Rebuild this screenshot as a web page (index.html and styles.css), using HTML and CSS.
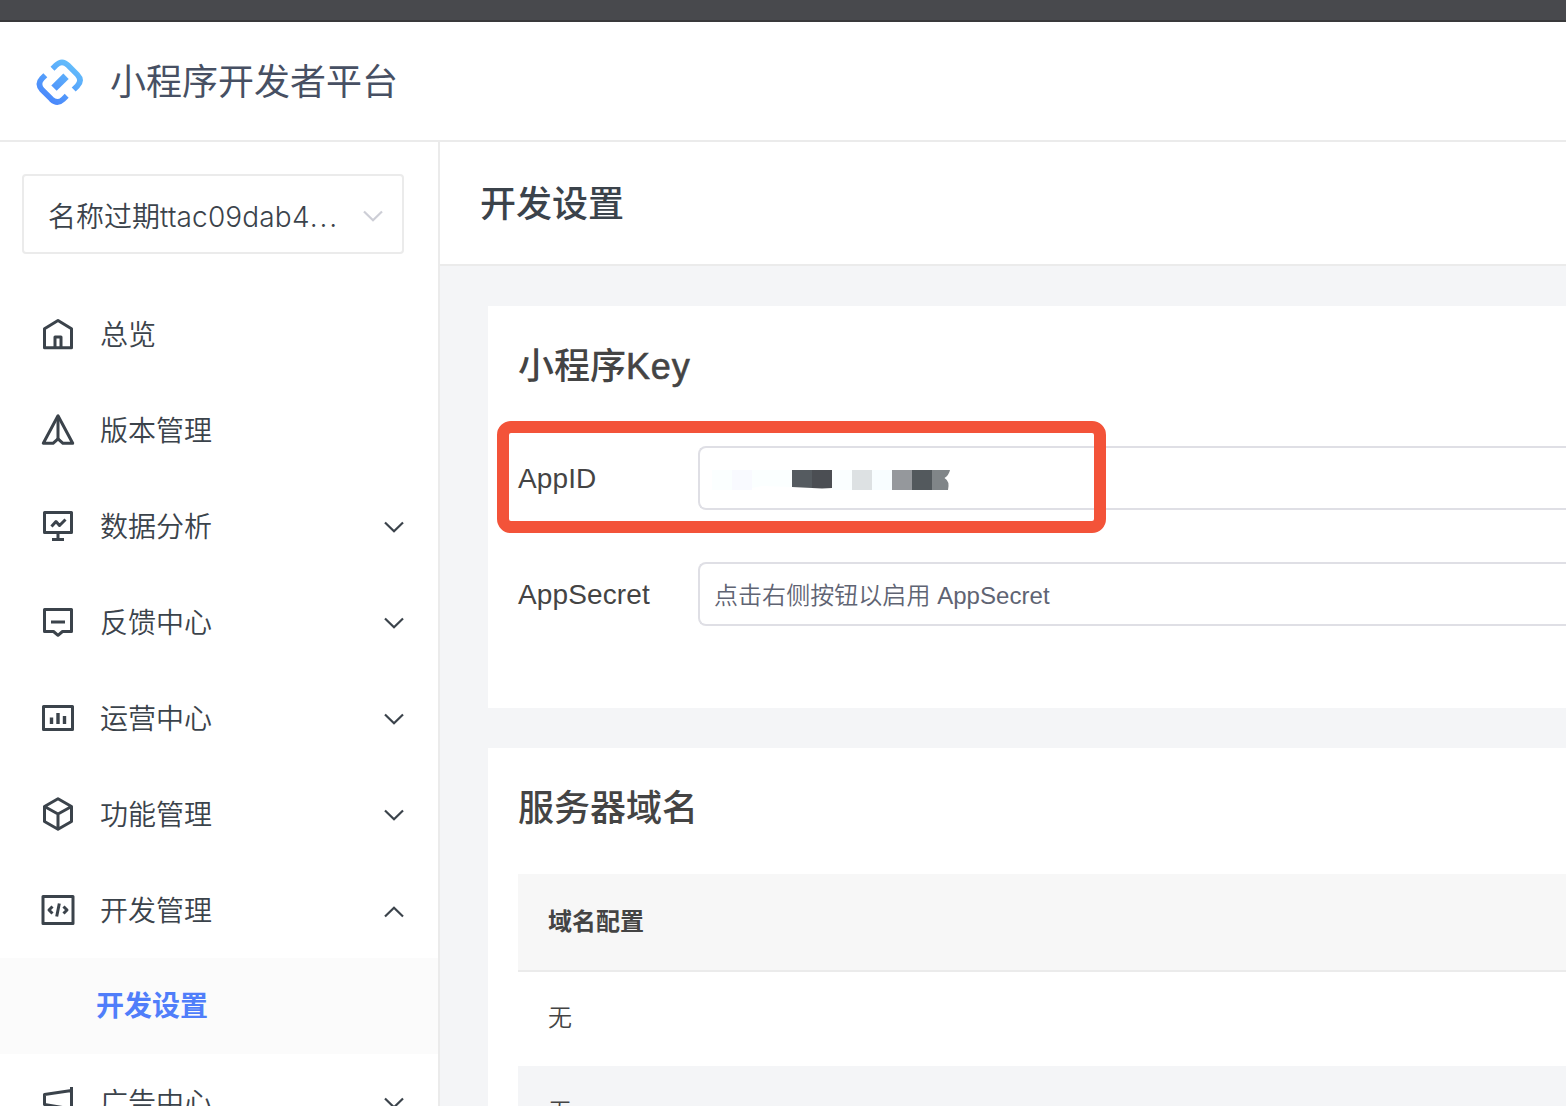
FILE: index.html
```html
<!DOCTYPE html>
<html lang="zh-CN">
<head>
<meta charset="utf-8">
<title>小程序开发者平台</title>
<link rel="stylesheet" href="styles.css">
</head>
<body>
<svg class="defs" width="0" height="0" aria-hidden="true">
  <symbol id="chevron" viewBox="0 0 22 14"><path d="M2 2.500 11 11.300 20 2.500"/></symbol>
</svg>
<div class="topbar"></div>
<header class="header">
  <svg class="logo" viewBox="0 0 48 48">
    <defs><linearGradient id="lg" gradientUnits="userSpaceOnUse" x1="12" y1="42" x2="36" y2="6"><stop offset="0" stop-color="#4a88fb"/><stop offset="1" stop-color="#63bdfb"/></linearGradient></defs>
    <g fill="none" stroke="url(#lg)" stroke-width="5.600">
      <path d="M16.500 10.800 20 7.300Q26 1.500 32 7.300L41.300 16.600Q46.800 22.400 41.300 28L37.700 31.600"/>
      <path d="M9.300 17.200 6 20.500Q.8 26 6 31.800L15.300 41.100Q21.300 46.800 27.200 41.200L30.700 37.800"/>
      <path d="M18 30.100 30 18.300" stroke-width="7.600"/>
    </g>
  </svg>
  <h1 class="brand">小程序开发者平台</h1>
</header>
<div class="layout">
  <aside class="sidebar">
    <div class="select"><span class="select-text">名称过期<span class="latin">ttac09dab4<span class="dots">...</span></span></span><svg class="chev muted"><use href="#chevron"/></svg></div>
    <nav class="menu">
      <div class="item"><svg class="icon" viewBox="0 0 36 36"><path d="M4.500 12.800 18 4.500 31.500 12.800V31.800H4.500Z"/><path d="M15 31V21H21V31"/></svg><span>总览</span></div>
      <div class="item"><svg class="icon" viewBox="0 0 36 36"><path d="M18 3.700 3.300 31.300H13L18 26.800 23 31.300H32.700Z"/><path d="M18 4V27"/></svg><span>版本管理</span></div>
      <div class="item"><svg class="icon" viewBox="0 0 36 36"><path d="M4.500 4.500H31.500V24.500H4.500ZM18 25V31M12 31.500H24"/><path d="M11.500 18.500 16 13.500 19.500 17.500 25.500 11.500"/></svg><span>数据分析</span><svg class="chev"><use href="#chevron"/></svg></div>
      <div class="item"><svg class="icon" viewBox="0 0 36 36"><path d="M4.500 5.500H31.500V27.500H22.500L18 31.300 13.500 27.500H4.500ZM11 18H25"/></svg><span>反馈中心</span><svg class="chev"><use href="#chevron"/></svg></div>
      <div class="item"><svg class="icon" viewBox="0 0 36 36"><path d="M3.500 6.500H32.500V29.500H3.500Z"/><path stroke-width="3.400" stroke-linecap="butt" d="M11.500 24V17.500M18 24V13M24.500 24V16"/></svg><span>运营中心</span><svg class="chev"><use href="#chevron"/></svg></div>
      <div class="item"><svg class="icon" viewBox="0 0 36 36"><path d="M18 2.800 31.500 10.500V25.500L18 33.200 4.500 25.500V10.500ZM4.500 10.500 18 18 31.500 10.500M18 18V33"/></svg><span>功能管理</span><svg class="chev"><use href="#chevron"/></svg></div>
      <div class="item"><svg class="icon" viewBox="0 0 36 36"><path d="M3 4.500H33V31.500H3Z"/><path d="M12.500 14.500 9 18 12.500 21.500M23.500 14.500 27 18 23.500 21.500M19.300 11.500 16.700 24.500"/></svg><span>开发管理</span><svg class="chev up"><use href="#chevron"/></svg></div>
      <div class="subitem">开发设置</div>
      <div class="item"><svg class="icon" viewBox="0 0 36 36"><path d="M31.500 3V32M31.500 6.500 4.500 10.500V20.500L31.500 25"/></svg><span>广告中心</span><svg class="chev"><use href="#chevron"/></svg></div>
    </nav>
  </aside>
  <main class="main">
    <div class="page-title"><h2>开发设置</h2></div>
    <div class="content">
      <section class="card keys">
        <h3>小程序<span class="key">Key</span></h3>
        <div class="field">
          <label>AppID</label>
          <div class="input">
            <svg class="mosaic" viewBox="0 0 240 20">
              <path fill="#fbffff" d="M0 0H80V17L50 16 30 20H0Z"/>
              <path fill="#f9faff" d="M20 0H40V20H20Z"/>
              <path fill="#555b60" d="M80 0H100V18L80 17Z"/>
              <path fill="#4b4e53" d="M100 0H120V18L110 18.600 100 18Z"/>
              <path fill="#fafeff" d="M120 0H140V20H120Z"/>
              <path fill="#dde1e3" d="M140 0H160V20H140Z"/>
              <path fill="#f8fdff" d="M160 0H180V20H160Z"/>
              <path fill="#95989c" d="M180 0H200V20H180Z"/>
              <path fill="#53595d" d="M200 0H220V20H200Z"/>
              <path fill="#808588" d="M220 0H238Q237 5 232.500 8 238 11 236 20H220Z"/>
            </svg>
          </div>
          <div class="highlight"></div>
        </div>
        <div class="field">
          <label>AppSecret</label>
          <div class="input placeholder">点击右侧按钮以启用 AppSecret</div>
        </div>
      </section>
      <section class="card domains">
        <h3>服务器域名</h3>
        <div class="table">
          <div class="thead">域名配置</div>
          <div class="row">无</div>
          <div class="row alt">无</div>
        </div>
      </section>
    </div>
  </main>
</div>
</body>
</html>
```
FILE: styles.css
```css
* { box-sizing: border-box; }
body {
  margin: 0;
  height: 1106px;
  overflow: hidden;
  display: flex;
  flex-direction: column;
  background: #fff;
  color: #444;
  font-family: "Liberation Sans", "Noto Sans CJK SC", sans-serif;
}
h1, h2, h3 { margin: 0; font-weight: 500; font-size: 36px; line-height: 52px; }
.defs { position: absolute; }
.topbar { flex: none; height: 22px; background: #48494d; border-bottom: 2px solid #39393b; }
.header {
  flex: none;
  height: 120px;
  display: flex;
  align-items: center;
  gap: 26px;
  padding: 2px 0 0 36px;
  border-bottom: 2px solid #ebebeb;
}
.logo { width: 48px; height: 48px; }
.brand { padding-top: 2px; color: #475063; font-weight: 400; }
.layout { flex: 1; min-height: 0; display: flex; }
.sidebar {
  flex: none;
  width: 440px;
  padding-top: 32px;
  border-right: 2px solid #ebebeb;
  overflow: hidden;
}
.select {
  display: flex;
  align-items: center;
  justify-content: space-between;
  width: 382px;
  height: 80px;
  margin: 0 0 32px 22px;
  padding: 2px 18px 0 24px;
  border: 2px solid #ebebeb;
  border-radius: 4px;
  color: #3b434b;
  font-size: 28px;
}
.select-text { font-weight: 350; white-space: nowrap; }
.latin { font-family: Inter, "Liberation Sans", sans-serif; font-weight: 300; letter-spacing: 0.15px; }
.dots { letter-spacing: 1.9px; }
.chev { flex: none; width: 22px; height: 14px; fill: none; stroke: #3b434b; stroke-width: 2.2; }
.chev.muted { margin-top: 2px; stroke: #cdced6; }
.item {
  display: flex;
  align-items: center;
  height: 96px;
  padding: 0 33px 0 40px;
  color: #3b434b;
  font-size: 28px;
  font-weight: 350;
}
.item span { padding-bottom: 3px; }
.item .icon { width: 36px; height: 36px; margin-right: 24px; }
.item .chev { margin: 2px 0 0 auto; }
.item .chev.up { margin-top: 4px; transform: rotate(180deg); }
.icon { fill: none; stroke: #3b434b; stroke-width: 3; stroke-linejoin: round; }
.subitem {
  height: 96px;
  padding: 1px 0 0 96px;
  line-height: 96px;
  background: #fbfbfb;
  color: #507efa;
  font-size: 28px;
  font-weight: 700;
}
.main { flex: 1; min-width: 0; overflow: hidden; background: #f4f5f7; }
.page-title {
  height: 124px;
  padding: 37px 0 0 40px;
  background: #fff;
  border-bottom: 2px solid #ebebeb;
}
.page-title h2 { color: #3b434b; }
.content { display: flex; flex-direction: column; gap: 40px; padding: 40px 0 0 48px; }
.card { background: #fff; padding-left: 30px; }
.keys { height: 402px; padding-top: 35px; }
.keys h3 { margin-bottom: 53px; }
.key { letter-spacing: 0.8px; -webkit-text-stroke: 0.6px #444; }
.field { position: relative; display: flex; align-items: center; height: 64px; margin-bottom: 52px; }
.field label { width: 180px; padding-top: 2px; font-size: 28px; letter-spacing: 0.12px; }
.input {
  flex: 1;
  height: 64px;
  display: flex;
  align-items: center;
  padding: 0 0 0 14px;
  border: 2px solid #dfdfe5;
  border-right: 0;
  border-radius: 8px 0 0 8px;
}
.placeholder { padding-bottom: 1px; color: #5f6473; font-size: 24px; font-weight: 350; letter-spacing: 0.05px; }
.mosaic { width: 240px; height: 20px; margin: 4px 0 0 -2px; }
.highlight {
  position: absolute;
  left: -21px;
  top: -25px;
  width: 609px;
  height: 112px;
  border: 12px solid #f35339;
  border-radius: 14px;
}
.domains { height: 500px; padding-top: 35px; }
.table { margin-top: 39px; font-size: 24px; }
.thead { height: 98px; padding-left: 30px; line-height: 96px; background: #f7f7f7; border-bottom: 2px solid #ebebeb; font-weight: 700; }
.row { height: 94px; padding-left: 30px; line-height: 92px; font-weight: 350; }
.row.alt { background: #f4f5f7; }
```
